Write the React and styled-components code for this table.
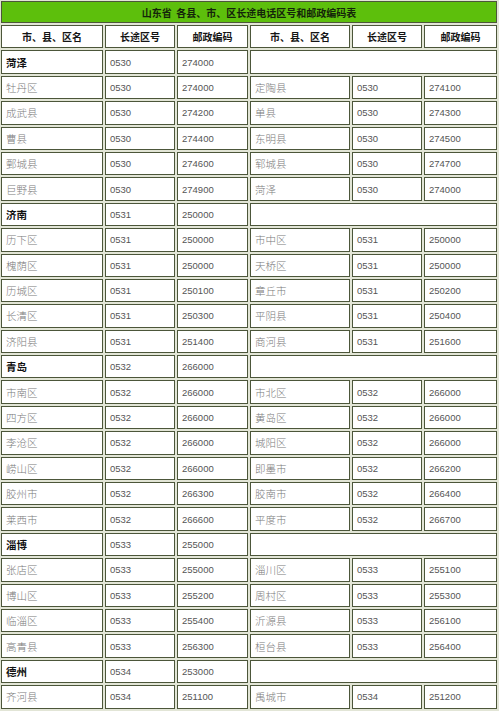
import React from "react";
import styled, { createGlobalStyle } from "styled-components";

const GlobalStyle = createGlobalStyle`
  body {
    margin: 0;
    background: #ffffff;
  }
`;

const Table = styled.table`
  width: 500px;
  table-layout: fixed;
  border-collapse: separate;
  border-spacing: 2px;
  background: #e2e5d6;
  margin: -1px 0 0 -1px;
`;

const Cell = styled.td`
  height: 23.4px;
  box-sizing: border-box;
  padding: 0 4px;
  border: 1px solid #4c563a;
  background: #ffffff;
  color: #7a7a7a;
  font-family: "Noto Sans CJK SC", "Liberation Sans", sans-serif;
  font-size: 10.5px;
  font-weight: ${(p) => (p.$bold ? 700 : 300)};
  ${(p) => p.$bold && "color: #111;"}
  white-space: nowrap;
  overflow: hidden;
`;

const NumCell = styled(Cell)`
  font-family: "Liberation Sans", Arial, sans-serif;
  font-weight: 400;
  font-size: 9.5px;
  color: #555;
`;

const HeadCell = styled.th`
  height: 23.4px;
  box-sizing: border-box;
  padding: 0 2px;
  border: 1px solid #4c563a;
  background: #ffffff;
  color: #151515;
  font-family: "Noto Sans CJK SC", sans-serif;
  font-size: 10px;
  font-weight: 700;
  text-align: center;
`;

const TitleCell = styled.th`
  height: 22px;
  box-sizing: border-box;
  border: 1px solid #4c563a;
  background: #5dbf0c;
  color: #14250a;
  font-family: "Noto Sans CJK SC", sans-serif;
  font-size: 10px;
  font-weight: 700;
  text-align: center;
  white-space: pre;
`;

const groups = [
  {
    city: ["菏泽", "0530", "274000"],
    rows: [
      ["牡丹区", "0530", "274000", "定陶县", "0530", "274100"],
      ["成武县", "0530", "274200", "单县", "0530", "274300"],
      ["曹县", "0530", "274400", "东明县", "0530", "274500"],
      ["鄄城县", "0530", "274600", "郓城县", "0530", "274700"],
      ["巨野县", "0530", "274900", "菏泽", "0530", "274000"],
    ],
  },
  {
    city: ["济南", "0531", "250000"],
    rows: [
      ["历下区", "0531", "250000", "市中区", "0531", "250000"],
      ["槐荫区", "0531", "250000", "天桥区", "0531", "250000"],
      ["历城区", "0531", "250100", "章丘市", "0531", "250200"],
      ["长清区", "0531", "250300", "平阴县", "0531", "250400"],
      ["济阳县", "0531", "251400", "商河县", "0531", "251600"],
    ],
  },
  {
    city: ["青岛", "0532", "266000"],
    rows: [
      ["市南区", "0532", "266000", "市北区", "0532", "266000"],
      ["四方区", "0532", "266000", "黄岛区", "0532", "266000"],
      ["李沧区", "0532", "266000", "城阳区", "0532", "266000"],
      ["崂山区", "0532", "266000", "即墨市", "0532", "266200"],
      ["胶州市", "0532", "266300", "胶南市", "0532", "266400"],
      ["莱西市", "0532", "266600", "平度市", "0532", "266700"],
    ],
  },
  {
    city: ["淄博", "0533", "255000"],
    rows: [
      ["张店区", "0533", "255000", "淄川区", "0533", "255100"],
      ["博山区", "0533", "255200", "周村区", "0533", "255300"],
      ["临淄区", "0533", "255400", "沂源县", "0533", "256100"],
      ["高青县", "0533", "256300", "桓台县", "0533", "256400"],
    ],
  },
  {
    city: ["德州", "0534", "253000"],
    rows: [["齐河县", "0534", "251100", "禹城市", "0534", "251200"]],
  },
];

const widths = [102, 70, 71, 100, 70, 73];

export default function App() {
  return (
    <>
      <GlobalStyle />
      <Table>
        <colgroup>
          {widths.map((w, i) => (
            <col key={i} style={{ width: w }} />
          ))}
        </colgroup>
        <thead>
          <tr>
            <TitleCell colSpan={6}>山东省  各县、市、区长途电话区号和邮政编码表</TitleCell>
          </tr>
          <tr>
            <HeadCell>市、县、区名</HeadCell>
            <HeadCell>长途区号</HeadCell>
            <HeadCell>邮政编码</HeadCell>
            <HeadCell>市、县、区名</HeadCell>
            <HeadCell>长途区号</HeadCell>
            <HeadCell>邮政编码</HeadCell>
          </tr>
        </thead>
        <tbody>
          {groups.map((g) => (
            <React.Fragment key={g.city[0]}>
              <tr>
                <Cell $bold>{g.city[0]}</Cell>
                <NumCell>{g.city[1]}</NumCell>
                <NumCell>{g.city[2]}</NumCell>
                <Cell colSpan={3} />
              </tr>
              {g.rows.map((r) => (
                <tr key={r[0] + r[3]}>
                  <Cell>{r[0]}</Cell>
                  <NumCell>{r[1]}</NumCell>
                  <NumCell>{r[2]}</NumCell>
                  <Cell>{r[3]}</Cell>
                  <NumCell>{r[4]}</NumCell>
                  <NumCell>{r[5]}</NumCell>
                </tr>
              ))}
            </React.Fragment>
          ))}
        </tbody>
      </Table>
    </>
  );
}
